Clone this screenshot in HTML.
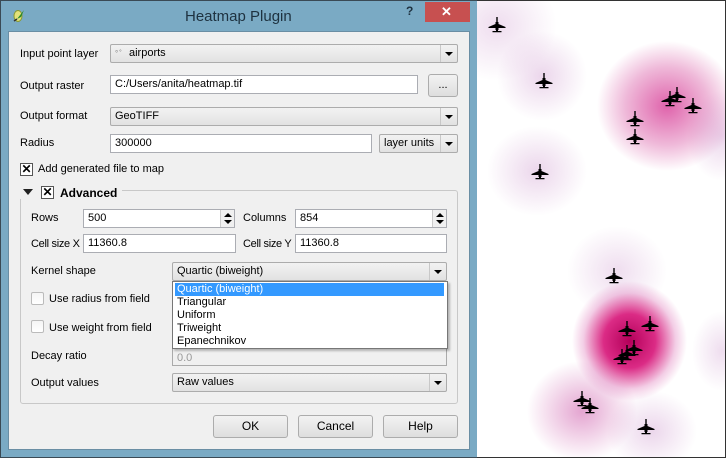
<!DOCTYPE html>
<html><head><meta charset="utf-8"><style>
*{box-sizing:border-box;margin:0;padding:0}
body{width:726px;height:458px;overflow:hidden;background:#fff;font-family:"Liberation Sans",sans-serif;font-size:11px;color:#000;position:relative}
.a{position:absolute}
#frame{left:0;top:0;width:477px;height:458px;background:#7aaac4;border-left:1px solid #3a4a55;border-top:1px solid #3a4a55;border-bottom:1px solid #3a4a55}
#client{left:8px;top:31px;width:462px;height:419px;background:#f0f0f0;border:1px solid #6a8ea4}
.lbl{position:absolute;white-space:nowrap;line-height:14px}
.fld{position:absolute;background:#fff;border:1px solid #abadb3;height:19px;padding-left:4px;line-height:17px;white-space:nowrap}
.cmb{position:absolute;background:linear-gradient(#f2f2f2,#e2e2e2);border:1px solid #acacac;border-radius:2px;height:19px;padding-left:4px;line-height:17px;white-space:nowrap}
.cmb:after{content:"";position:absolute;right:4px;top:7px;border-left:4px solid transparent;border-right:4px solid transparent;border-top:4px solid #000}
.cmb .sep{position:absolute;right:16px;top:0;bottom:0;border-left:1px solid #c8c8c8}
.btn{position:absolute;background:linear-gradient(#f2f2f2,#dedede);border:1px solid #acacac;border-radius:3px;height:23px;text-align:center;line-height:21px;font-size:12px}
.cb{position:absolute;width:13px;height:13px;border:1px solid #555;background:#fff;font-size:12px;line-height:11px;text-align:center;font-weight:bold}
.cbe{position:absolute;width:13px;height:13px;border:1px solid #bbb;border-radius:2px;background:linear-gradient(#f4f4f4,#fff)}
.spin{position:absolute;right:0;top:0;width:14px;height:17px;border-left:1px solid #ccc;background:#f0f0f0}
.spin:before{content:"";position:absolute;left:3px;top:3px;border-left:4px solid transparent;border-right:4px solid transparent;border-bottom:4px solid #000}
.spin:after{content:"";position:absolute;left:3px;top:10px;border-left:4px solid transparent;border-right:4px solid transparent;border-top:4px solid #000}
</style></head><body>
<div class="a" id="frame"></div>
<svg class="a" style="left:12px;top:9px" width="14" height="14" viewBox="0 0 14 14"><ellipse cx="6" cy="7" rx="4" ry="5.5" fill="#e3e27a" stroke="#8a9a30"/><path d="M5 10 L12 1 L9 8 Z" fill="#2a8a2a"/><path d="M2 12 L5 10" stroke="#333" stroke-width="1.5"/></svg>
<div class="lbl" style="left:185px;top:8px;font-size:15px;color:#1e3240;line-height:18px">Heatmap Plugin</div>
<div class="lbl" style="left:406px;top:4px;font-size:12px;font-weight:bold;color:#1e3240">?</div>
<div class="a" style="left:425px;top:2px;width:45px;height:20px;background:#c75050"></div>
<div class="lbl" style="left:441px;top:5px;color:#fff;font-size:13px;font-weight:bold">✕</div>
<div class="a" id="client"></div>

<div class="lbl" style="left:20px;top:47px">Input point layer</div>
<div class="cmb" style="left:110px;top:44px;width:348px"><span style="color:#888;font-size:8px;letter-spacing:1px">°˚</span> &nbsp;airports<span class="sep"></span></div>
<div class="lbl" style="left:20px;top:79px">Output raster</div>
<div class="fld" style="left:110px;top:75px;width:308px">C:/Users/anita/heatmap.tif</div>
<div class="btn" style="left:428px;top:74px;width:30px;font-size:11px">...</div>
<div class="lbl" style="left:20px;top:109px">Output format</div>
<div class="cmb" style="left:110px;top:107px;width:348px">GeoTIFF<span class="sep"></span></div>
<div class="lbl" style="left:20px;top:136px">Radius</div>
<div class="fld" style="left:110px;top:134px;width:262px">300000</div>
<div class="cmb" style="left:379px;top:134px;width:79px">layer units<span class="sep"></span></div>
<div class="cb" style="left:20px;top:163px">✕</div>
<div class="lbl" style="left:38px;top:162px">Add generated file to map</div>

<div class="a" style="left:20px;top:190px;width:438px;height:214px;border:1px solid #c8c8c8;border-radius:3px"></div>
<div class="a" style="left:18px;top:183px;width:104px;height:16px;background:#f0f0f0"></div>
<div class="a" style="left:23px;top:189px;border-left:5px solid transparent;border-right:5px solid transparent;border-top:6px solid #222"></div>
<div class="cb" style="left:41px;top:186px">✕</div>
<div class="lbl" style="left:60px;top:186px;font-weight:bold;font-size:12px">Advanced</div>

<div class="lbl" style="left:31px;top:211px">Rows</div>
<div class="fld" style="left:83px;top:209px;width:152px">500<span class="spin"></span></div>
<div class="lbl" style="left:243px;top:211px">Columns</div>
<div class="fld" style="left:295px;top:209px;width:152px">854<span class="spin"></span></div>
<div class="lbl" style="left:31px;top:237px;letter-spacing:-0.3px">Cell size X</div>
<div class="fld" style="left:83px;top:234px;width:153px">11360.8</div>
<div class="lbl" style="left:243px;top:237px;letter-spacing:-0.3px">Cell size Y</div>
<div class="fld" style="left:295px;top:234px;width:152px">11360.8</div>
<div class="lbl" style="left:31px;top:264px">Kernel shape</div>
<div class="cmb" style="left:172px;top:262px;width:275px">Quartic (biweight)<span class="sep"></span></div>
<div class="cbe" style="left:31px;top:292px"></div>
<div class="lbl" style="left:49px;top:292px">Use radius from field</div>
<div class="cbe" style="left:31px;top:320px"></div>
<div class="lbl" style="left:49px;top:321px">Use weight from field</div>
<div class="lbl" style="left:31px;top:349px">Decay ratio</div>
<div class="fld" style="left:172px;top:347px;width:275px;height:19px;background:#f0f0f0;border-color:#aaa;color:#999;padding-top:2px">0.0</div>
<div class="a" style="left:172px;top:281px;width:276px;height:68px;background:#fff;border:1px solid #777;box-shadow:2px 2px 2px rgba(0,0,0,.25)">
<div style="background:#3399ff;color:#fff;margin:1px 3px 0 2px;height:13px;line-height:13px;padding-left:2px">Quartic (biweight)</div>
<div style="line-height:13px;padding-left:4px">Triangular<br>Uniform<br>Triweight<br>Epanechnikov</div></div>
<div class="lbl" style="left:31px;top:376px">Output values</div>
<div class="cmb" style="left:172px;top:373px;width:275px">Raw values<span class="sep"></span></div>

<div class="btn" style="left:213px;top:415px;width:75px">OK</div>
<div class="btn" style="left:298px;top:415px;width:75px">Cancel</div>
<div class="btn" style="left:383px;top:415px;width:75px">Help</div>

<div class="a" style="left:477px;top:0;width:249px;height:458px;background:#fff;overflow:hidden;border-right:1px solid #333;border-top:1px solid #333;border-bottom:1px solid #333">
<div class="a" style="left:-40px;top:-30px;width:120px;height:110px;border-radius:50%;background:radial-gradient(closest-side,rgba(190,120,190,.25),rgba(190,120,190,0))"></div>
<div class="a" style="left:20px;top:30px;width:90px;height:90px;border-radius:50%;background:radial-gradient(closest-side,rgba(190,120,190,.3),rgba(190,120,190,0))"></div>
<div class="a" style="left:10px;top:125px;width:100px;height:90px;border-radius:50%;background:radial-gradient(closest-side,rgba(190,120,190,.3),rgba(190,120,190,0))"></div>
<div class="a" style="left:120px;top:40px;width:140px;height:130px;border-radius:50%;background:radial-gradient(closest-side,rgba(215,60,150,.8),rgba(215,80,160,.4) 60%,rgba(200,120,190,0))"></div>
<div class="a" style="left:210px;top:90px;width:70px;height:90px;border-radius:50%;background:radial-gradient(closest-side,rgba(190,120,190,.3),rgba(190,120,190,0))"></div>
<div class="a" style="left:90px;top:225px;width:100px;height:90px;border-radius:50%;background:radial-gradient(closest-side,rgba(190,120,190,.25),rgba(190,120,190,0))"></div>
<div class="a" style="left:95px;top:280px;width:115px;height:120px;border-radius:50%;background:radial-gradient(closest-side,rgba(180,0,90,1),rgba(215,20,120,.9) 45%,rgba(215,90,170,.3) 80%,rgba(200,120,190,0))"></div>
<div class="a" style="left:50px;top:360px;width:110px;height:100px;border-radius:50%;background:radial-gradient(closest-side,rgba(205,90,170,.55),rgba(200,120,190,0))"></div>
<div class="a" style="left:130px;top:390px;width:90px;height:80px;border-radius:50%;background:radial-gradient(closest-side,rgba(190,120,190,.3),rgba(190,120,190,0))"></div>
<div class="a" style="left:215px;top:310px;width:60px;height:80px;border-radius:50%;background:radial-gradient(closest-side,rgba(190,120,190,.25),rgba(190,120,190,0))"></div>
<svg class="a" style="left:0;top:0" width="249" height="458">
<defs><symbol id="p" viewBox="0 0 18 16"><rect x="8.3" y="0" width="1.4" height="6" fill="#000"/><path d="M7.5 5 H10.5 V13 H7.5Z M0.5 10 L7.5 7 H10.5 L17.5 10 V11 H0.5Z M4.5 14 H13.5 V15.3 H4.5Z M8 12 H10 V15 H8Z" fill="#000"/></symbol></defs>
<g>
<use href="#p" x="11" y="16" width="18" height="16"/>
<use href="#p" x="58" y="72" width="18" height="16"/>
<use href="#p" x="184" y="90" width="18" height="16"/>
<use href="#p" x="191" y="86" width="18" height="16"/>
<use href="#p" x="207" y="97" width="18" height="16"/>
<use href="#p" x="149" y="110" width="18" height="16"/>
<use href="#p" x="149" y="128" width="18" height="16"/>
<use href="#p" x="54" y="163" width="18" height="16"/>
<use href="#p" x="128" y="267" width="18" height="16"/>
<use href="#p" x="141" y="320" width="18" height="16"/>
<use href="#p" x="164" y="315" width="18" height="16"/>
<use href="#p" x="148" y="339" width="18" height="16"/>
<use href="#p" x="141" y="344" width="18" height="16"/>
<use href="#p" x="136" y="348" width="18" height="16"/>
<use href="#p" x="96" y="390" width="18" height="16"/>
<use href="#p" x="104" y="397" width="18" height="16"/>
<use href="#p" x="160" y="418" width="18" height="16"/>
</g></svg>
</div>
</body></html>
